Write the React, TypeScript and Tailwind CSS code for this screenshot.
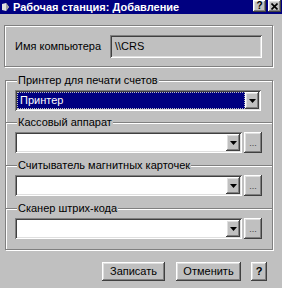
import React from "react";

const raised =
  "shadow-[inset_-1px_-1px_0_#404040,inset_1px_1px_0_#ffffff,inset_-2px_-2px_0_#808080,inset_2px_2px_0_#dfdfdf]";
const sunken =
  "shadow-[inset_1px_1px_0_#808080,inset_-1px_-1px_0_#ffffff,inset_2px_2px_0_#404040,inset_-2px_-2px_0_#dfdfdf]";

function Arrow() {
  return (
    <div className={`w-[14px] h-[17px] bg-[#c0c0c0] flex items-center justify-center ${raised}`}>
      <svg width="7" height="4" viewBox="0 0 7 4">
        <path d="M0 0H7L3.5 4Z" fill="#000" />
      </svg>
    </div>
  );
}

function Combo({ value, dots }: { value?: string; dots?: boolean }) {
  return (
    <div className="flex gap-[2px]">
      <div
        className={`h-[21px] ${dots ? "w-[227px]" : "w-[246px]"} bg-white flex items-center p-[2px] ${sunken}`}
      >
        <div className="flex-1 h-full flex items-center">
          {value ? (
            <div className="h-full w-full bg-[#000080] text-white flex items-center pl-[3px] outline-1 outline-dotted outline-[#c0c0c0] -outline-offset-1">
              {value}
            </div>
          ) : null}
        </div>
        <Arrow />
      </div>
      {dots ? (
        <div
          className={`w-[18px] h-[21px] bg-[#c0c0c0] flex items-end justify-center pb-[5px] text-[9px] leading-none text-[#404040] ${raised}`}
        >
          ...
        </div>
      ) : null}
    </div>
  );
}

function Section({
  label,
  h,
  children,
}: {
  label: string;
  h: string;
  children: React.ReactNode;
}) {
  return (
    <div className={`relative border-t border-[#808080] shadow-[inset_0_1px_0_#ffffff] pt-[9px] pl-[9px] ${h}`}>
      <div className="absolute left-[11px] top-[-7px] bg-[#c0c0c0] px-[1px] leading-[12px]">
        {label}
      </div>
      {children}
    </div>
  );
}

export default function App() {
  return (
    <div className="w-[282px] h-[288px] bg-[#c0c0c0] overflow-hidden flex flex-col font-['Liberation_Sans',Arial,sans-serif] text-[11px] text-black">
      <div className="h-[14px] bg-[#000080] flex items-start pl-[1px]">
        <svg width="9" height="10" viewBox="0 0 9 10" className="mt-[2px]">
          <path d="M1 2L5 1L8 5L5 9L1 8Z" fill="#e0e0e0" />
          <path d="M5 1L8 5L5 9Z" fill="#a0a0a0" />
        </svg>
        <div className="ml-[3px] mt-[1px] font-bold text-white leading-[12px] text-[11px]">
          Рабочая станция: Добавление
        </div>
        <div className="ml-auto flex gap-[2px] pr-[1px]">
          <div className={`w-[13px] h-[12px] bg-[#c0c0c0] flex items-center justify-center font-bold text-[10px] leading-none ${raised}`}>
            ?
          </div>
          <div className={`w-[13px] h-[12px] bg-[#c0c0c0] flex items-center justify-center ${raised}`}>
            <svg width="7" height="7" viewBox="0 0 7 7">
              <path d="M0.5 0.5L6.5 6.5M6.5 0.5L0.5 6.5" stroke="#000" strokeWidth="1.6" />
            </svg>
          </div>
        </div>
      </div>

      <div className="mt-[11px] ml-[4px] w-[269px] h-[42px] border border-[#808080] shadow-[inset_1px_1px_0_#ffffff,1px_1px_0_#ffffff] flex items-center">
        <div className="w-[105px] pl-[10px]">Имя компьютера</div>
        <div className={`w-[152px] h-[23px] bg-[#c0c0c0] flex items-center pl-[5px] ${sunken}`}>
          \\CRS
        </div>
      </div>

      <div className="mt-[13px] ml-[5px] w-[268px] h-[170px] border-l border-r border-b border-[#808080] shadow-[inset_1px_0_0_#ffffff,1px_1px_0_#ffffff] flex flex-col">
        <Section label="Принтер для печати счетов" h="h-[42px]">
          <Combo value="Принтер" />
        </Section>
        <Section label="Кассовый аппарат" h="h-[43px]">
          <Combo dots />
        </Section>
        <Section label="Считыватель магнитных карточек" h="h-[43px]">
          <Combo dots />
        </Section>
        <Section label="Сканер штрих-кода" h="flex-1">
          <Combo dots />
        </Section>
      </div>

      <div className="mt-[12px] flex pl-[102px]">
        <div className={`w-[63px] h-[19px] flex items-center justify-center ${raised}`}>Записать</div>
        <div className={`ml-[11px] w-[65px] h-[19px] flex items-center justify-center ${raised}`}>Отменить</div>
        <div className={`ml-[10px] w-[16px] h-[19px] flex items-center justify-center font-bold ${raised}`}>?</div>
      </div>
    </div>
  );
}
